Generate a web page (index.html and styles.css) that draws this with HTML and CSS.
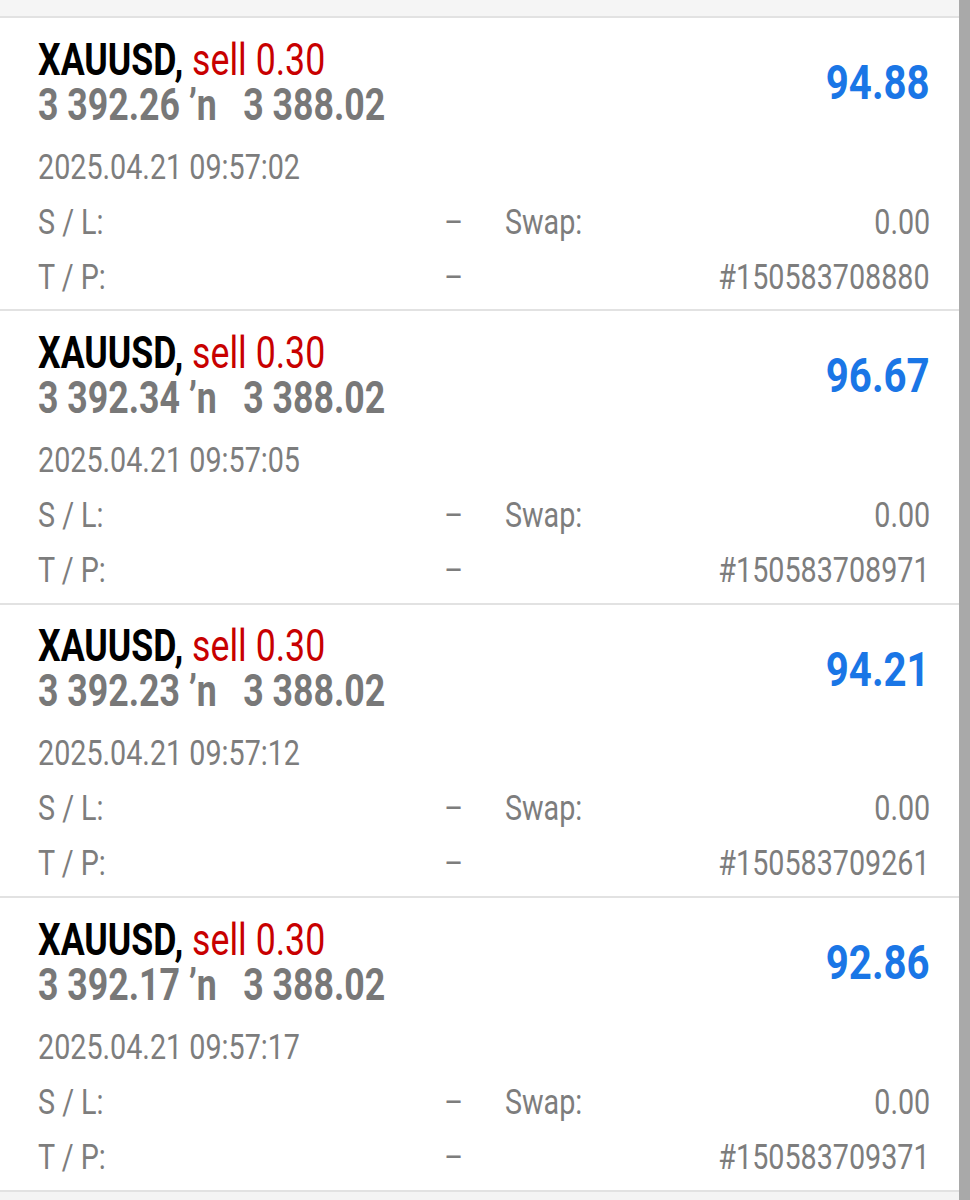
FILE: index.html
```html
<!DOCTYPE html>
<html lang="en">
<head>
    <meta charset="UTF-8">
    <meta name="viewport" content="width=device-width, initial-scale=1.0">
    <title>Positions</title>
    <link rel="stylesheet" href="styles.css">
</head>
<body>
    <div class="screen">
        <div class="list">
            <div class="topbar"></div>

            <div class="trade">
                <div class="head">
                    <div class="title">
                        <div class="line"><span class="symbol">XAUUSD,</span> <span class="side">sell 0.30</span></div>
                        <div class="line prices">3 392.26 ʼn&nbsp;&nbsp; 3 388.02</div>
                    </div>
                    <div class="profit">94.88</div>
                </div>
                <div class="time">2025.04.21 09:57:02</div>
                <div class="details">
                    <div class="field"><span>S / L:</span><span>–</span></div>
                    <div class="field"><span>Swap:</span><span>0.00</span></div>
                    <div class="field"><span>T / P:</span><span>–</span></div>
                    <div class="field"><span></span><span>#150583708880</span></div>
                </div>
            </div>

            <div class="trade">
                <div class="head">
                    <div class="title">
                        <div class="line"><span class="symbol">XAUUSD,</span> <span class="side">sell 0.30</span></div>
                        <div class="line prices">3 392.34 ʼn&nbsp;&nbsp; 3 388.02</div>
                    </div>
                    <div class="profit">96.67</div>
                </div>
                <div class="time">2025.04.21 09:57:05</div>
                <div class="details">
                    <div class="field"><span>S / L:</span><span>–</span></div>
                    <div class="field"><span>Swap:</span><span>0.00</span></div>
                    <div class="field"><span>T / P:</span><span>–</span></div>
                    <div class="field"><span></span><span>#150583708971</span></div>
                </div>
            </div>

            <div class="trade">
                <div class="head">
                    <div class="title">
                        <div class="line"><span class="symbol">XAUUSD,</span> <span class="side">sell 0.30</span></div>
                        <div class="line prices">3 392.23 ʼn&nbsp;&nbsp; 3 388.02</div>
                    </div>
                    <div class="profit">94.21</div>
                </div>
                <div class="time">2025.04.21 09:57:12</div>
                <div class="details">
                    <div class="field"><span>S / L:</span><span>–</span></div>
                    <div class="field"><span>Swap:</span><span>0.00</span></div>
                    <div class="field"><span>T / P:</span><span>–</span></div>
                    <div class="field"><span></span><span>#150583709261</span></div>
                </div>
            </div>

            <div class="trade">
                <div class="head">
                    <div class="title">
                        <div class="line"><span class="symbol">XAUUSD,</span> <span class="side">sell 0.30</span></div>
                        <div class="line prices">3 392.17 ʼn&nbsp;&nbsp; 3 388.02</div>
                    </div>
                    <div class="profit">92.86</div>
                </div>
                <div class="time">2025.04.21 09:57:17</div>
                <div class="details">
                    <div class="field"><span>S / L:</span><span>–</span></div>
                    <div class="field"><span>Swap:</span><span>0.00</span></div>
                    <div class="field"><span>T / P:</span><span>–</span></div>
                    <div class="field"><span></span><span>#150583709371</span></div>
                </div>
            </div>
        </div>
        <div class="scrollbar"></div>
    </div>
</body>
</html>
```

FILE: styles.css
```css
* {
    margin: 0;
    padding: 0;
    box-sizing: border-box;
}
body {
    background-color: #f4f4f4;
    font-family: Roboto, "Liberation Sans", sans-serif;
}
.screen {
    height: 1200px;
    display: flex;
    overflow: hidden;
}
.list {
    flex: 1;
    background-color: #f4f4f4;
}
.scrollbar {
    width: 11px;
    background-color: #a9a9a9;
}
.topbar {
    height: 18px;
    background-color: #f5f5f5;
    border-bottom: 2px solid #e2e2e2;
}
.trade {
    background-color: #fff;
    border-bottom: 2px solid #e2e2e2;
    padding: 19.5px 29px 4.9px 38px;
}
/* the app font is narrow, so the text is squeezed sideways */
.title,
.time,
.field span {
    transform: scaleX(0.82);
    transform-origin: left center;
}
.profit,
.field span:last-child {
    transform: scaleX(0.82);
    transform-origin: right center;
}
.head {
    display: flex;
    justify-content: space-between;
    align-items: center;
}
.title {
    font-size: 43.5px;
    line-height: 45px;
    font-weight: 700;
    white-space: nowrap;
}
.line {
    height: 45px;
}
.symbol {
    color: #000;
}
.side {
    color: #c80000;
    font-weight: 400;
}
.prices {
    color: #787878;
}
.profit {
    font-size: 49px;
    line-height: 57px;
    font-weight: 700;
    color: #1a76e6;
}
.time {
    margin-top: 12px;
    font-size: 35px;
    line-height: 55px;
    color: #7d7d7d;
}
.details {
    display: grid;
    grid-template-columns: 1fr 1fr;
    column-gap: 42px;
    font-size: 35px;
    line-height: 55px;
    color: #7d7d7d;
}
.field {
    display: flex;
    justify-content: space-between;
}
```
